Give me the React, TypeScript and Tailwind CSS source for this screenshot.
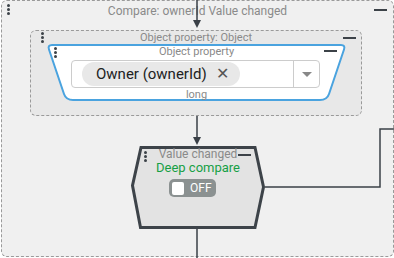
import React from "react";

const Handle = ({ className = "" }: { className?: string }) => (
  <div className={"flex flex-col gap-[1px] " + className}>
    <span className="w-[3px] h-[3px] rounded-full bg-[#3c4248]" />
    <span className="w-[3px] h-[3px] rounded-full bg-[#3c4248]" />
    <span className="w-[3px] h-[3px] rounded-full bg-[#3c4248]" />
  </div>
);

const Minus = ({ className = "" }: { className?: string }) => (
  <div className={"w-[13px] h-[2px] bg-[#3c4248] " + className} />
);

const Connectors = () => (
  <svg
    className="absolute inset-0 pointer-events-none"
    width={394}
    height={258}
    viewBox="0 0 394 258"
  >
    <g stroke="#3a4047" strokeWidth={1.5} fill="none">
      <line x1={197} y1={0} x2={197} y2={22} />
      <line x1={197} y1={116} x2={197} y2={139} />
      <line x1={197} y1={229} x2={197} y2={258} />
      <polyline points="265,187 380,187 380,129 394,129" />
    </g>
    <polygon points="193,20 201,20 197,28" fill="#3a4047" />
    <polygon points="193,137 201,137 197,145" fill="#3a4047" />
  </svg>
);

const ObjectPropertyNode = () => (
  <div className="relative w-[299px] h-[57px] ml-[16px]">
    <svg className="absolute inset-0" width={299} height={57} viewBox="0 0 299 57">
      <path
        d="M5,1 H294 Q298.5,1 297,5.5 L282,50 Q280,56 273,56 H26 Q19,56 17,50 L2,5.5 Q0.5,1 5,1 Z"
        fill="#ffffff"
        stroke="#4aa3df"
        strokeWidth={2}
      />
    </svg>
    <div className="relative flex flex-col">
      <div className="grid grid-cols-[1fr_auto_1fr] items-start h-[14px]">
        <Handle className="justify-self-start ml-[7px] mt-[3px]" />
        <span className="text-[11px] leading-[13px] pt-[1px] text-[#8a8a8a]">Object property</span>
        <Minus className="justify-self-end mr-[9px] mt-[6px]" />
      </div>
      <div className="ml-[24px] mt-[2px] w-[249px] h-[28px] flex items-center border border-[#cccccc] rounded-[4px] bg-white">
        <div className="ml-[10px] h-[24px] flex items-center gap-[9px] rounded-full bg-[#e8e8e8] pl-[14px] pr-[11px]">
          <span className="text-[15px] leading-[18px] text-[#222222]">Owner (ownerId)</span>
          <span className="text-[16px] leading-[18px] text-[#555555]">✕</span>
        </div>
        <div className="flex-1" />
        <div className="w-px h-[26px] bg-[#cccccc]" />
        <div className="w-[25px] flex justify-center">
          <div className="w-0 h-0 border-l-[5px] border-r-[5px] border-t-[5px] border-l-transparent border-r-transparent border-t-[#888888]" />
        </div>
      </div>
      <span className="text-center text-[11px] leading-[13px] text-[#8a8a8a]">long</span>
    </div>
  </div>
);

const ValueChangedNode = () => (
  <div className="relative w-[134px] h-[83px] ml-[129px] mt-[30px]">
    <svg className="absolute inset-0" width={134} height={83} viewBox="0 0 134 83">
      <path
        d="M10,1.5 H124 L132.5,41 L124,81.5 H9.5 L1.5,39.5 Z"
        fill="#e3e3e3"
        stroke="#3d4349"
        strokeWidth={3}
      />
    </svg>
    <div className="relative flex flex-col">
      <div className="grid grid-cols-[1fr_auto_1fr] items-start h-[15px] pt-[2px]">
        <Handle className="justify-self-start ml-[13px] mt-[3px]" />
        <span className="text-[12px] leading-[13px] text-[#8a8a8a]">Value changed</span>
        <Minus className="justify-self-start ml-px mt-[6px]" />
      </div>
      <span className="text-center text-[13px] leading-[14px] text-[#17a045]">Deep compare</span>
      <div className="ml-[38px] mt-[4px] w-[47px] h-[18px] flex items-center gap-[6px] rounded-[5px] bg-[#8b9191] pl-[3px]">
        <div className="w-[12px] h-[13px] rounded-[2px] bg-white" />
        <span className="text-[12px] leading-[14px] text-white">OFF</span>
      </div>
    </div>
  </div>
);

export default function App() {
  return (
    <div className="relative w-[394px] h-[258px] overflow-hidden bg-white font-['Roboto',sans-serif]">
      <div className="ml-px w-[393px] h-[257px] flex flex-col border border-dashed border-[#9a9a9a] rounded-[6px] bg-[#f0f0f0]">
        <div className="grid grid-cols-[1fr_auto_1fr] items-start h-[29px]">
          <Handle className="justify-self-start ml-[5px] mt-[3px]" />
          <span className="text-[12px] leading-[14px] pt-[3px] text-[#8a8a8a]">
            Compare: ownerId Value changed
          </span>
          <Minus className="justify-self-end mr-[6px] mt-[8px]" />
        </div>
        <div className="ml-[28px] w-[332px] h-[86px] flex flex-col border border-dashed border-[#9a9a9a] rounded-[6px] bg-[#e8e8e8]">
          <div className="grid grid-cols-[1fr_auto_1fr] items-start h-[13px]">
            <Handle className="justify-self-start ml-[10px] mt-[1px]" />
            <span className="text-[11px] leading-[13px] text-[#8a8a8a]">Object property: Object</span>
            <Minus className="justify-self-end mr-[5px] mt-[6px]" />
          </div>
          <ObjectPropertyNode />
        </div>
        <ValueChangedNode />
      </div>
      <Connectors />
    </div>
  );
}
